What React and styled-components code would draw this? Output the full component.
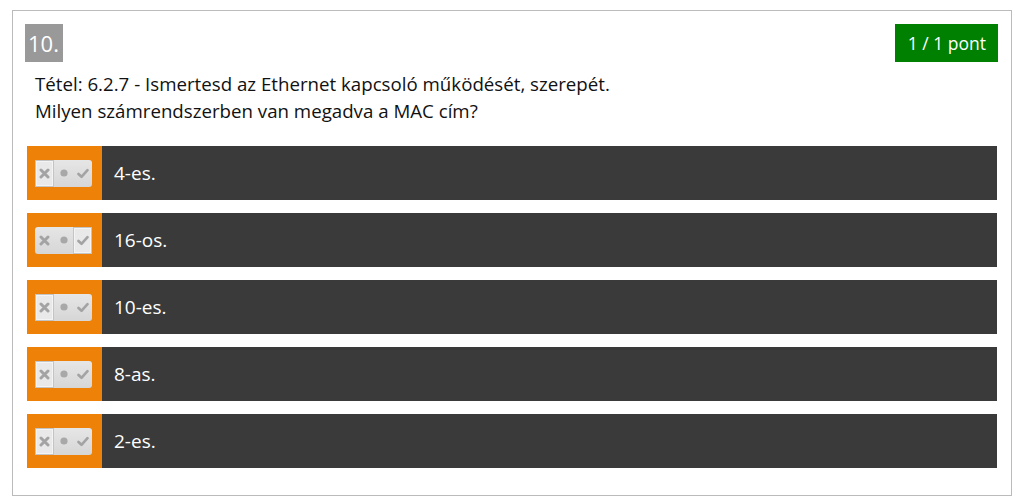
import React from 'react';
import styled, { createGlobalStyle } from 'styled-components';

const GlobalStyle = createGlobalStyle`
  body {
    margin: 0;
    background: #fff;
    font-family: "Open Sans", "Noto Sans", sans-serif;
  }
`;

const Card = styled.div`
  box-sizing: border-box;
  width: 1000px;
  margin: 10px 0 0 12px;
  border: 1px solid #bbb;
  padding: 13px 13px 27px 12px;
`;

const Header = styled.div`
  display: flex;
  justify-content: space-between;
  align-items: flex-start;
`;

const Number = styled.div`
  background: #999;
  color: #fff;
  font-size: 22px;
  line-height: 38px;
  height: 38px;
  padding: 0 4px 0 3px;
`;

const Points = styled.div`
  background: #008000;
  color: #fff;
  font-size: 17.5px;
  line-height: 38px;
  height: 38px;
  padding: 0 12px 0 13px;
`;

const Question = styled.div`
  margin: 8px 0 0 10px;
  font-size: 18.7px;
  line-height: 27px;
  color: #111;
`;

const Answers = styled.div`
  display: flex;
  flex-direction: column;
  gap: 13px;
  margin: 22px 1px 0 2px;
`;

const Answer = styled.div`
  display: flex;
  height: 54px;
  background: #3a3a3a;
`;

const Handle = styled.div`
  width: 75px;
  flex: none;
  background: #ee8208;
  display: flex;
  align-items: center;
  padding-left: 8px;
  box-sizing: border-box;
`;

const Toggle = styled.div`
  display: flex;
  width: 57px;
  height: 27px;
  border-radius: 3px;
  background: linear-gradient(#e6e6e6, #d6d6d6);
  box-sizing: border-box;
`;

const Seg = styled.div`
  width: 19px;
  height: 27px;
  box-sizing: border-box;
  display: flex;
  align-items: center;
  justify-content: center;
  border: 1px solid ${({ $on }) => ($on ? '#c4c4c4' : 'transparent')};
  background: ${({ $on }) => ($on ? '#e9e9e9' : 'transparent')};
  box-shadow: ${({ $on }) => ($on ? 'inset 0 0 0 1px #f4f4f4' : 'none')};
`;

const Label = styled.div`
  color: #fff;
  font-size: 19px;
  display: flex;
  align-items: center;
  padding-left: 12px;
`;

const Cross = () => (
  <svg width="11" height="11" viewBox="0 0 11 11">
    <path d="M2 2 L9 9 M9 2 L2 9" stroke="#a3a3a3" strokeWidth="3" strokeLinecap="round" />
  </svg>
);

const Dot = () => (
  <svg width="10" height="10" viewBox="0 0 10 10">
    <circle cx="5" cy="5" r="3.6" fill="#a8a8a8" />
  </svg>
);

const Check = () => (
  <svg width="12" height="11" viewBox="0 0 12 11">
    <path d="M1.5 6 L4.5 8.8 L10.5 2.2" stroke="#a3a3a3" strokeWidth="2.6" fill="none" strokeLinecap="round" strokeLinejoin="round" />
  </svg>
);

const answers = [
  { text: '4-es.', state: 'no' },
  { text: '16-os.', state: 'yes' },
  { text: '10-es.', state: 'no' },
  { text: '8-as.', state: 'no' },
  { text: '2-es.', state: 'no' },
];

const App = () => (
  <>
    <GlobalStyle />
    <Card>
      <Header>
        <Number>10.</Number>
        <Points>1 / 1 pont</Points>
      </Header>
      <Question>
        Tétel: 6.2.7 - Ismertesd az Ethernet kapcsoló működését, szerepét.
        <br />
        Milyen számrendszerben van megadva a MAC cím?
      </Question>
      <Answers>
        {answers.map(a => (
          <Answer key={a.text}>
            <Handle>
              <Toggle>
                <Seg $on={a.state === 'no'}><Cross /></Seg>
                <Seg><Dot /></Seg>
                <Seg $on={a.state === 'yes'}><Check /></Seg>
              </Toggle>
            </Handle>
            <Label>{a.text}</Label>
          </Answer>
        ))}
      </Answers>
    </Card>
  </>
);

export default App;
